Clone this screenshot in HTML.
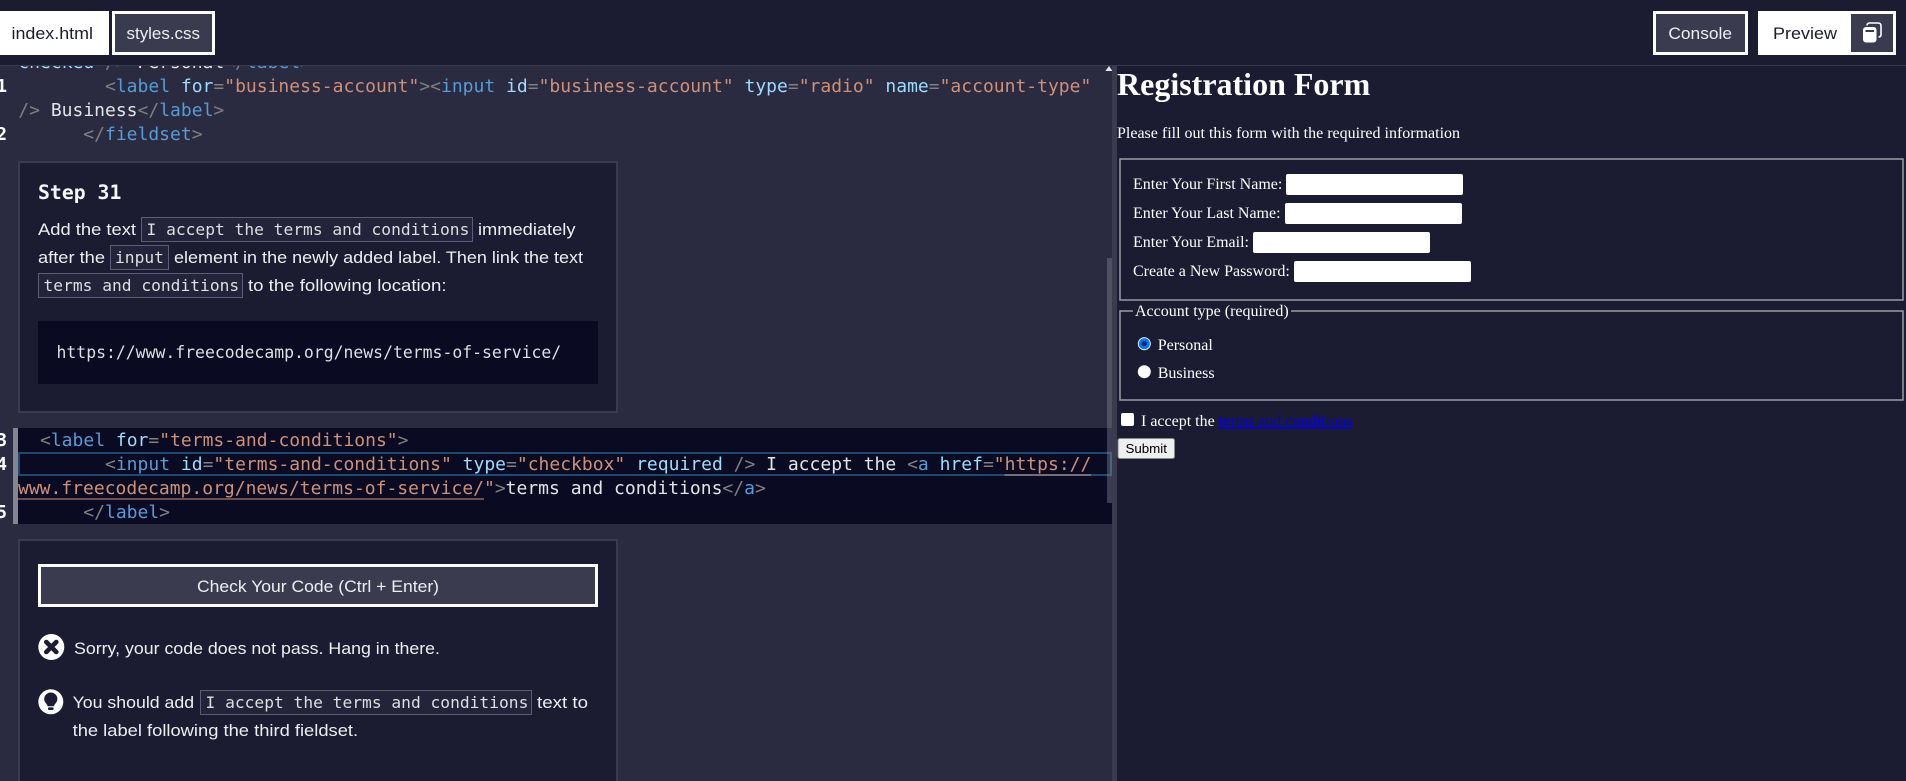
<!DOCTYPE html>
<html lang="en"><head><meta charset="utf-8"><title>Registration Form</title>
<style>
html,body{margin:0;padding:0;background:#1b1b32;overflow:hidden;width:1906px;height:781px}
svg{display:block;position:absolute;left:0;top:0}
text{white-space:pre}
.ui{font-family:"Liberation Sans",sans-serif;font-size:17px;fill:#eeeef0}
.m{font-family:"DejaVu Sans Mono","Liberation Mono",monospace;font-size:18px;fill:#dcdce0}
.s{font-family:"DejaVu Sans Mono","Liberation Mono",monospace;font-size:16.25px;fill:#dfdfe2}
.r{font-family:"Liberation Serif",serif;font-size:16px;fill:#fff}
.n{font-family:"DejaVu Sans Mono","Liberation Mono",monospace;font-size:18px;fill:#fff;font-weight:700}
.g{fill:#808080}.t{fill:#569cd6}.a{fill:#9cdcfe}.v{fill:#ce9178}.w{fill:#e4e4e7}
</style></head><body>
<svg width="1906" height="781" viewBox="0 0 1906 781" xmlns="http://www.w3.org/2000/svg">
<defs><clipPath id="ec"><rect x="0" y="66" width="1107" height="715"/></clipPath></defs>
<rect width="1906" height="781" fill="#1b1b32"/>
<!-- editor -->
<rect x="0" y="66" width="1112" height="715" fill="#2a2a40"/>
<g clip-path="url(#ec)">
<text class="m" x="18.3" y="68"><tspan class="a">checked</tspan> <tspan class="g">/&gt;</tspan> <tspan class="w">Personal</tspan><tspan class="g">&lt;/</tspan><tspan class="t">label</tspan><tspan class="g">&gt;</tspan></text>
</g>
<text class="m" x="105" y="92"><tspan class="g">&lt;</tspan><tspan class="t">label</tspan> <tspan class="a">for</tspan><tspan class="g">=</tspan><tspan class="v">"business-account"</tspan><tspan class="g">&gt;&lt;</tspan><tspan class="t">input</tspan> <tspan class="a">id</tspan><tspan class="g">=</tspan><tspan class="v">"business-account"</tspan> <tspan class="a">type</tspan><tspan class="g">=</tspan><tspan class="v">"radio"</tspan> <tspan class="a">name</tspan><tspan class="g">=</tspan><tspan class="v">"account-type"</tspan></text>
<text class="m" x="18.3" y="116"><tspan class="g">/&gt;</tspan> <tspan class="w">Business</tspan><tspan class="g">&lt;/</tspan><tspan class="t">label</tspan><tspan class="g">&gt;</tspan></text>
<text class="m" x="83.3" y="140"><tspan class="g">&lt;/</tspan><tspan class="t">fieldset</tspan><tspan class="g">&gt;</tspan></text>
<text class="n" x="-3.8" y="92">1</text>
<text class="n" x="-3.8" y="140">2</text>

<!-- step panel -->
<rect x="19" y="162" width="598" height="250" fill="#1b1b32" stroke="#3b3b4f" stroke-width="2"/>
<text x="38" y="199" font-family="DejaVu Sans Mono,Liberation Mono,monospace" font-size="19.8" font-weight="700" fill="#f5f6f7">Step 31</text>
<text class="ui" x="38" y="235" textLength="98" lengthAdjust="spacingAndGlyphs">Add the text</text>
<rect x="141.5" y="217.5" width="331" height="24" fill="#23233a" stroke="#5c5c7a"/>
<text class="s" x="146.5" y="235">I accept the terms and conditions</text>
<text class="ui" x="478" y="235" textLength="97.5" lengthAdjust="spacingAndGlyphs">immediately</text>
<text class="ui" x="38" y="263" textLength="67" lengthAdjust="spacingAndGlyphs">after the</text>
<rect x="110.5" y="245.5" width="58" height="24" fill="#23233a" stroke="#5c5c7a"/>
<text class="s" x="115" y="263">input</text>
<text class="ui" x="174" y="263" textLength="409" lengthAdjust="spacingAndGlyphs">element in the newly added label. Then link the text</text>
<rect x="38.5" y="273.5" width="204" height="24" fill="#23233a" stroke="#5c5c7a"/>
<text class="s" x="43.5" y="291">terms and conditions</text>
<text class="ui" x="248" y="291" textLength="198.5" lengthAdjust="spacingAndGlyphs">to the following location:</text>
<rect x="38" y="321" width="560" height="63" fill="#0a0a23"/>
<text class="s" x="56.5" y="358" style="font-size:16.46px">https://www.freecodecamp.org/news/terms-of-service/</text>

<!-- highlighted code -->
<rect x="18" y="428" width="1094" height="96" fill="#0a0a23"/>
<rect x="13" y="428" width="5" height="96" fill="#858591"/>
<rect x="19" y="453" width="1092" height="22" fill="none" stroke="#1c4a70" stroke-width="2"/>
<text class="n" x="-3.8" y="446">3</text>
<text class="n" x="-3.8" y="470">4</text>
<text class="n" x="-3.8" y="518">5</text>
<text class="m" x="40" y="446"><tspan class="g">&lt;</tspan><tspan class="t">label</tspan> <tspan class="a">for</tspan><tspan class="g">=</tspan><tspan class="v">"terms-and-conditions"</tspan><tspan class="g">&gt;</tspan></text>
<text class="m" x="105" y="470"><tspan class="g">&lt;</tspan><tspan class="t">input</tspan> <tspan class="a">id</tspan><tspan class="g">=</tspan><tspan class="v">"terms-and-conditions"</tspan> <tspan class="a">type</tspan><tspan class="g">=</tspan><tspan class="v">"checkbox"</tspan> <tspan class="a">required</tspan> <tspan class="g">/&gt;</tspan> <tspan class="w">I accept the</tspan> <tspan class="g">&lt;</tspan><tspan class="t">a</tspan> <tspan class="a">href</tspan><tspan class="g">=</tspan><tspan class="v">"https://</tspan></text>
<rect x="1004.5" y="474.5" width="86.5" height="1" fill="#ce9178"/>
<text class="m" x="18" y="494"><tspan class="v">www.freecodecamp.org/news/terms-of-service/"</tspan><tspan class="g">&gt;</tspan><tspan class="w">terms and conditions</tspan><tspan class="g">&lt;/</tspan><tspan class="t">a</tspan><tspan class="g">&gt;</tspan></text>
<rect x="18" y="498.5" width="466" height="1" fill="#ce9178"/>
<text class="m" x="83.3" y="518"><tspan class="g">&lt;/</tspan><tspan class="t">label</tspan><tspan class="g">&gt;</tspan></text>

<!-- bottom panel -->
<rect x="19" y="540" width="598" height="250" fill="#1b1b32" stroke="#3b3b4f" stroke-width="2"/>
<rect x="39.5" y="565.5" width="557" height="40" fill="#3b3b4f" stroke="#fff" stroke-width="3"/>
<text class="ui" x="197" y="592" textLength="242" lengthAdjust="spacingAndGlyphs">Check Your Code (Ctrl + Enter)</text>
<circle cx="51.3" cy="647" r="13" fill="#fff"/>
<path d="M46.3 642l10 10M56.3 642l-10 10" stroke="#1b1b32" stroke-width="4.6" stroke-linecap="round" fill="none"/>
<text class="ui" x="74" y="654" textLength="366" lengthAdjust="spacingAndGlyphs">Sorry, your code does not pass. Hang in there.</text>
<circle cx="50.8" cy="701.8" r="12.5" fill="#fff"/>
<path d="M50.8 692.5a6.6 6.6 0 0 0-6.6 6.6c0 2.4 1.6 3.8 2.7 5.4.4.7.6 1.2.7 1.8h6.4c.1-.6.3-1.1.7-1.8 1.1-1.6 2.7-3 2.7-5.4a6.6 6.6 0 0 0-6.6-6.6z" fill="#1b1b32"/>
<rect x="48" y="707.4" width="5.6" height="2.6" rx="1" fill="#1b1b32"/>
<text class="ui" x="72.6" y="708" textLength="121.5" lengthAdjust="spacingAndGlyphs">You should add</text>
<rect x="200.5" y="690.5" width="331" height="24" fill="#23233a" stroke="#5c5c7a"/>
<text class="s" x="205.5" y="708">I accept the terms and conditions</text>
<text class="ui" x="537" y="708" textLength="51" lengthAdjust="spacingAndGlyphs">text to</text>
<text class="ui" x="72.6" y="736" textLength="285.5" lengthAdjust="spacingAndGlyphs">the label following the third fieldset.</text>

<!-- scrollbar + splitter -->
<rect x="1107" y="258" width="5" height="245" fill="#8a8a99" fill-opacity=".4"/>
<path d="M1109 66l3.4 5h-7z" fill="#e8e8ee"/>
<rect x="1112" y="66" width="5" height="715" fill="#3b3b4f"/>

<!-- header -->
<rect x="0" y="0" width="1906" height="65" fill="#1b1b32"/>
<rect x="0" y="65" width="1906" height="1" fill="#3b3b4f"/>
<rect x="0" y="11" width="109" height="44" fill="#fff"/>
<text class="ui" x="11.5" y="39" style="fill:#1b1b32" textLength="81.5" lengthAdjust="spacingAndGlyphs">index.html</text>
<rect x="113.5" y="12.5" width="100" height="41" fill="#3b3b4f" stroke="#fff" stroke-width="3"/>
<text class="ui" x="126.5" y="39" textLength="73.5" lengthAdjust="spacingAndGlyphs">styles.css</text>
<rect x="1654.5" y="12.5" width="92" height="41" fill="#3b3b4f" stroke="#fff" stroke-width="3"/>
<text class="ui" x="1668.4" y="39" textLength="63.6" lengthAdjust="spacingAndGlyphs">Console</text>
<rect x="1758" y="11" width="138" height="44" fill="#fff"/>
<text class="ui" x="1773" y="39" style="fill:#1b1b32" textLength="64" lengthAdjust="spacingAndGlyphs">Preview</text>
<rect x="1851" y="14" width="42" height="38" fill="#3b3b4f"/>
<path d="M1867 25.5c0-1.5 1-2.5 2.5-2.5h8.5c2 0 3 1 3 3v8.5c0 1.6-.8 2.5-2.5 2.5" fill="none" stroke="#fff" stroke-width="1.6"/>
<rect x="1863" y="27" width="13.5" height="15.5" rx="3" fill="#fff"/>
<rect x="1865.5" y="30" width="8.5" height="2" fill="#3b3b4f"/>

<!-- preview -->
<text x="1117" y="95" font-family="Liberation Serif,serif" font-size="32" font-weight="700" fill="#fff">Registration Form</text>
<text class="r" x="1117" y="138">Please fill out this form with the required information</text>
<rect x="1120" y="159" width="783" height="141" fill="none" stroke="#9c9ca6" stroke-width="1.5"/>
<text class="r" x="1133" y="189">Enter Your First Name:</text>
<rect x="1286" y="174" width="177" height="21" rx="2" fill="#fff"/>
<text class="r" x="1133" y="218">Enter Your Last Name:</text>
<rect x="1285" y="203" width="177" height="21" rx="2" fill="#fff"/>
<text class="r" x="1133" y="247">Enter Your Email:</text>
<rect x="1253" y="232" width="177" height="21" rx="2" fill="#fff"/>
<text class="r" x="1133" y="276">Create a New Password:</text>
<rect x="1294" y="261" width="177" height="21" rx="2" fill="#fff"/>
<rect x="1120" y="311" width="783" height="89" fill="none" stroke="#9c9ca6" stroke-width="1.5"/>
<rect x="1133" y="305" width="158" height="12" fill="#1b1b32"/>
<text class="r" x="1135" y="316">Account type (required)</text>
<circle cx="1144.3" cy="343.7" r="6.5" fill="#fff"/>
<circle cx="1144.3" cy="343.7" r="5.6" fill="#0075ff"/>
<circle cx="1144.3" cy="343.7" r="2.6" fill="#12296b"/>
<text class="r" x="1157.7" y="350">Personal</text>
<circle cx="1144.3" cy="371.7" r="6.5" fill="#fff"/>
<text class="r" x="1157.7" y="378">Business</text>
<rect x="1121" y="413" width="13" height="13" rx="2" fill="#fff"/>
<text class="r" x="1141" y="426">I accept the <tspan fill="#0000ee" text-decoration="underline">terms and conditions</tspan></text>
<rect x="1118" y="438.5" width="56.5" height="20" rx="2" fill="#efefef" stroke="#8a8a8a"/>
<text x="1146.2" y="453" text-anchor="middle" font-family="Liberation Sans,sans-serif" font-size="13.33" fill="#000">Submit</text>
</svg>
</body></html>
